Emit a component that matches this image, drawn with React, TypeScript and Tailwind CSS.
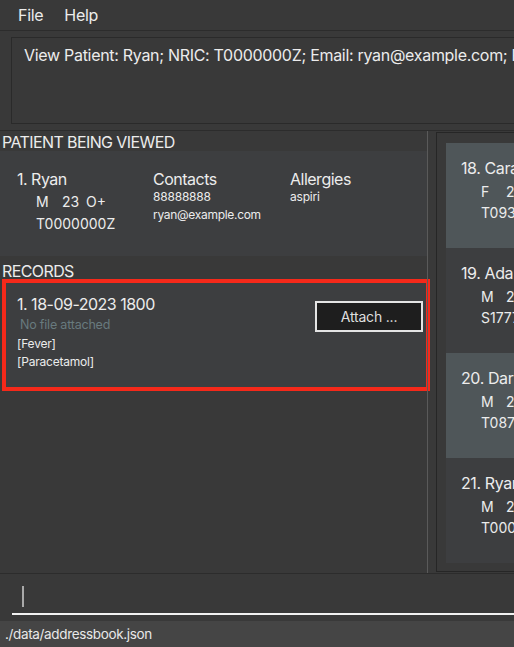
import React from "react";

type Person = {
  idx: number;
  name: string;
  sex: string;
  age: string;
  blood: string;
  nric: string;
};

const people: Person[] = [
  { idx: 18, name: "Carabelle", sex: "F", age: "21", blood: "A+", nric: "T0931234A" },
  { idx: 19, name: "Adarsh", sex: "M", age: "25", blood: "B+", nric: "S1777777A" },
  { idx: 20, name: "Darren", sex: "M", age: "27", blood: "AB-", nric: "T0871234B" },
  { idx: 21, name: "Ryan", sex: "M", age: "23", blood: "O+", nric: "T0000000Z" },
];

const PersonRow = ({ p, odd }: { p: Person; odd: boolean }) => (
  <div
    className={`h-[105px] pl-[15px] pt-[14px] whitespace-nowrap ${
      odd ? "bg-[#3d3e40]" : "bg-[#4f5659]"
    }`}
  >
    <div className="text-[16px] leading-[22px] tracking-[-0.4px]">
      {p.idx}. {p.name}
    </div>
    <div className="pl-[20px] mt-[3px] text-[14px] leading-[20px] flex">
      <span className="w-[25px]">{p.sex}</span>
      <span className="w-[25px]">{p.age}</span>
      <span>{p.blood}</span>
    </div>
    <div className="pl-[20px] mt-[1px] text-[14px] leading-[20px]">{p.nric}</div>
  </div>
);

export default function App() {
  return (
    <div
      className="w-[514px] h-[647px] overflow-hidden flex flex-col bg-[#393939] text-[#ececec]"
      style={{ fontFamily: "Inter, 'Open Sans', sans-serif" }}
    >
      {/* menu bar */}
      <div className="h-[31px] shrink-0 flex items-center gap-[21px] pl-[18px] border-b border-[#2c2c2c] text-[16px] tracking-[-0.3px]">
        <span>File</span>
        <span>Help</span>
      </div>

      {/* result display */}
      <div className="h-[100px] shrink-0 px-[11px] pt-[6px] pb-[6px] border-b border-[#2c2c2c]">
        <div className="h-full border border-[#2a2a2a] mr-[-20px] pl-[12px] pt-[6px] overflow-hidden whitespace-nowrap text-[16px] leading-[22px] tracking-[-0.3px]">
          View Patient: Ryan; NRIC: T0000000Z; Email: ryan@example.com; Phone: 88888888
        </div>
      </div>

      {/* main area */}
      <div className="h-[443px] shrink-0 flex border-b border-[#2c2c2c]">
        <div className="w-[427px] shrink-0 flex flex-col">
          <div className="h-[20px] pl-[2px] text-[16px] leading-[22px] tracking-[-0.6px]">PATIENT BEING VIEWED</div>
          <div className="h-[105px] bg-[#3d3e40] flex pl-[17px] pt-[17px] whitespace-nowrap">
            <div className="w-[136px]">
              <div className="text-[16px] leading-[22px] tracking-[-0.5px]">1. Ryan</div>
              <div className="pl-[19px] mt-[2px] text-[14px] leading-[20px] flex">
                <span className="w-[26px]">M</span>
                <span className="w-[24px]">23</span>
                <span>O+</span>
              </div>
              <div className="pl-[19px] mt-[2px] text-[14px] leading-[20px]">T0000000Z</div>
            </div>
            <div className="w-[137px]">
              <div className="text-[16px] leading-[22px] tracking-[-0.5px]">Contacts</div>
              <div className="text-[12px] leading-[16px] -mt-[1px] tracking-[-0.2px]">88888888</div>
              <div className="text-[12px] leading-[16px] mt-[2px] tracking-[-0.3px]">ryan@example.com</div>
            </div>
            <div>
              <div className="text-[16px] leading-[22px] tracking-[-0.5px]">Allergies</div>
              <div className="text-[12px] leading-[16px] -mt-[1px] tracking-[-0.2px]">aspiri</div>
            </div>
          </div>
          <div className="h-[23px] pl-[2px] pt-[4px] text-[16px] leading-[22px] tracking-[-0.6px]">RECORDS</div>
          <div className="ml-[2px] w-[428px] h-[112px] border-[4px] border-[#f5291a] bg-[#3d3e40] flex justify-between whitespace-nowrap">
            <div className="pl-[11px] pt-[10px]">
              <div className="text-[16px] leading-[22px] tracking-[-0.5px]">1. 18-09-2023 1800</div>
              <div className="pl-[3px] mt-[1px] text-[12.5px] leading-[18px] text-[#687a7e] tracking-[-0.2px]">No file attached</div>
              <div className="mt-[1px] text-[12px] leading-[18px] tracking-[-0.2px]">[Fever]</div>
              <div className="text-[12px] leading-[18px] tracking-[-0.2px]">[Paracetamol]</div>
            </div>
            <div className="pt-[18px] mr-[3px]">
              <button className="w-[108px] h-[31px] bg-[#1e1e1e] border-2 border-[#e4e4e4] text-[14px] text-[#dedede] tracking-[-0.2px]">
                Attach ...
              </button>
            </div>
          </div>
        </div>
        <div className="w-px bg-[#5a5a5a] shrink-0" />
        <div className="flex-1 pl-[8px] pt-[1px] pb-[1px]">
          <div className="h-full border border-[#262626] mr-[-20px] pl-[9px] pt-[10px]">
            {people.map((p, i) => (
              <PersonRow key={p.idx} p={p} odd={i % 2 === 1} />
            ))}
          </div>
        </div>
      </div>

      {/* command box */}
      <div className="h-[47px] shrink-0 pl-[12px] pt-[12px]">
        <div className="h-[29px] border-b-2 border-[#f2f2f2] pl-[10px]">
          <div className="w-[2px] h-[21px] bg-[#a9a9a9]" />
        </div>
      </div>

      {/* status bar */}
      <div className="flex-1 bg-[#454545] pl-[5px] pt-[3px] text-[13.5px] leading-[20px] text-[#e8e8e8] tracking-[-0.35px]">
        ./data/addressbook.json
      </div>
    </div>
  );
}
